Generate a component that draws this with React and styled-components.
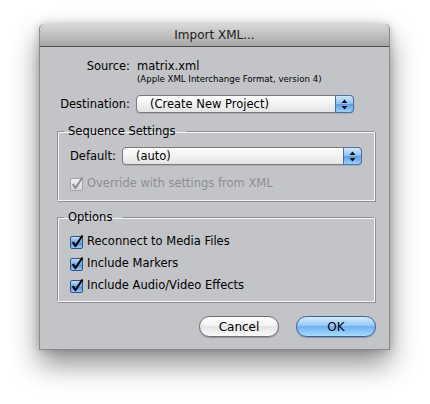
import styled, { createGlobalStyle } from "styled-components";

const GlobalStyle = createGlobalStyle`
    body {
        margin: 0;
        background: #ffffff;
        font-family: "DejaVu Sans", "Liberation Sans", sans-serif;
        font-size: 11.5px;
        color: #000;
    }
`;

const Page = styled.div`
    padding: 24px 0 0 39px;
    height: 380px;
`;

const Window = styled.div`
    width: 351px;
    display: flex;
    flex-direction: column;
    background: #c3c4c8;
    border: 1px solid #8a8a8a;
    border-top: none;
    border-radius: 5px 5px 0 0;
    box-shadow: 0 14px 28px rgba(0, 0, 0, 0.45), 0 0 8px rgba(0, 0, 0, 0.2);
    box-sizing: border-box;
`;

const TitleBar = styled.div`
    height: 22px;
    display: flex;
    align-items: center;
    justify-content: center;
    background: linear-gradient(#d8d8d8, #a7a7a7);
    border-bottom: 1px solid #4e4e4e;
    border-radius: 5px 5px 0 0;
    font-size: 12px;
    color: #202020;
`;

const Body = styled.div`
    display: flex;
    flex-direction: column;
    padding: 11px 13px 12px 16px;
`;

const FormRow = styled.div`
    display: grid;
    grid-template-columns: 74px 1fr;
    column-gap: ${(p) => p.gap || 7}px;
    align-items: center;
    margin-top: ${(p) => p.top || 0}px;
    line-height: 16px;
`;

const Label = styled.span`
    text-align: right;
`;

const Note = styled.div`
    grid-column: 2;
    font-size: 8.6px;
    line-height: 11px;
`;

const Popup = styled.div`
    position: relative;
    width: ${(p) => p.width}px;
    height: 18px;
    box-sizing: border-box;
    border: 1px solid #7a7a7a;
    border-radius: 4px;
    background: linear-gradient(#ffffff, #f2f2f2 50%, #e4e4e4);
    display: flex;
    align-items: center;
    padding-left: 13px;
    box-shadow: 0 1px 1px rgba(0, 0, 0, 0.12);
`;

const PopupArrows = styled.div`
    position: absolute;
    right: -1px;
    top: -1px;
    bottom: -1px;
    width: 17px;
    border: 1px solid #4d6fa8;
    border-radius: 0 4px 4px 0;
    background: linear-gradient(#d3e8fb, #8dbef0 50%, #5c9ee6 52%, #9fd0fb);
    display: flex;
    align-items: center;
    justify-content: center;
`;

const Group = styled.fieldset`
    margin: ${(p) => p.top}px 0 0 1px;
    padding: ${(p) => p.pt}px 12px ${(p) => p.pb}px 12px;
    border: 1px solid;
    border-color: #8f9094 #f4f4f6 #f4f4f6 #8f9094;
    box-shadow: inset 1px 1px 0 #f4f4f6, 1px 1px 0 #8f9094;
    width: 318px;
    box-sizing: border-box;
    display: flex;
    flex-direction: column;
    gap: ${(p) => p.gap || 0}px;
`;

const Legend = styled.legend`
    padding: 0 10px 0 4px;
    margin-left: -6px;
    line-height: 16px;
`;

const InlineRow = styled.div`
    display: flex;
    align-items: center;
    gap: 6px;
    line-height: 16px;
`;

const CheckRow = styled.label`
    display: flex;
    align-items: center;
    gap: 2px;
    margin-left: -1px;
    line-height: 16px;
    color: ${(p) => (p.disabled ? "#8d8e92" : "#000")};
`;

const Buttons = styled.div`
    display: flex;
    justify-content: flex-end;
    gap: 17px;
    margin-top: 14px;
`;

const Button = styled.button`
    width: 80px;
    height: 21px;
    border-radius: 11px;
    font-family: inherit;
    font-size: 12px;
    color: #000;
    padding: 0;
    border: 1px solid ${(p) => (p.primary ? "#3b5c9e" : "#6f6f6f")};
    background: ${(p) =>
        p.primary
            ? "linear-gradient(#d4ecff, #94c9f7 45%, #6eb0f0 50%, #a9dcff)"
            : "linear-gradient(#ffffff, #f4f4f4 45%, #e4e4e4 50%, #fafafa)"};
    box-shadow: 0 1px 1px rgba(0, 0, 0, 0.25);
`;

function Arrows() {
    return (
        <svg width="7" height="11" viewBox="0 0 7 11">
            <path d="M3.5 0.5 L6.5 4 L0.5 4 Z" fill="#111" />
            <path d="M3.5 10.5 L6.5 7 L0.5 7 Z" fill="#111" />
        </svg>
    );
}

function CheckBox({ disabled }) {
    const id = disabled ? "cbd" : "cbe";
    return (
        <svg width="16" height="15" viewBox="0 0 16 15">
            <defs>
                <linearGradient id={id} x1="0" y1="0" x2="0" y2="1">
                    {disabled ? (
                        <>
                            <stop offset="0" stopColor="#f2f2f2" />
                            <stop offset="1" stopColor="#d6d6d8" />
                        </>
                    ) : (
                        <>
                            <stop offset="0" stopColor="#c6e2fb" />
                            <stop offset="0.5" stopColor="#6fa9e8" />
                            <stop offset="0.55" stopColor="#4e90e0" />
                            <stop offset="1" stopColor="#9bd1fb" />
                        </>
                    )}
                </linearGradient>
            </defs>
            <rect
                x="1.5"
                y="2.5"
                width="12"
                height="12"
                rx="1.5"
                fill={`url(#${id})`}
                stroke={disabled ? "#a4a5a9" : "#32527f"}
            />
            <path
                d="M3.8 8.2 L6.5 12 L13.5 1.5"
                fill="none"
                stroke={disabled ? "#909195" : "#000"}
                strokeWidth="2.2"
                strokeLinejoin="round"
            />
        </svg>
    );
}

export default function App() {
    return (
        <>
            <GlobalStyle />
            <Page>
                <Window>
                    <TitleBar>Import XML...</TitleBar>
                    <Body>
                        <FormRow>
                            <Label>Source:</Label>
                            <span>matrix.xml</span>
                            <Note>(Apple XML Interchange Format, version 4)</Note>
                        </FormRow>
                        <FormRow top={10} gap={6}>
                            <Label>Destination:</Label>
                            <Popup width={218}>
                                (Create New Project)
                                <PopupArrows>
                                    <Arrows />
                                </PopupArrows>
                            </Popup>
                        </FormRow>
                        <Group top={10} pt={8} pb={9} gap={10}>
                            <Legend>Sequence Settings</Legend>
                            <InlineRow>
                                <span>Default:</span>
                                <Popup width={240}>
                                    (auto)
                                    <PopupArrows>
                                        <Arrows />
                                    </PopupArrows>
                                </Popup>
                            </InlineRow>
                            <CheckRow disabled>
                                <CheckBox disabled />
                                Override with settings from XML
                            </CheckRow>
                        </Group>
                        <Group top={8} pt={8} pb={8} gap={6}>
                            <Legend>Options</Legend>
                            <CheckRow>
                                <CheckBox />
                                Reconnect to Media Files
                            </CheckRow>
                            <CheckRow>
                                <CheckBox />
                                Include Markers
                            </CheckRow>
                            <CheckRow>
                                <CheckBox />
                                Include Audio/Video Effects
                            </CheckRow>
                        </Group>
                        <Buttons>
                            <Button>Cancel</Button>
                            <Button primary>OK</Button>
                        </Buttons>
                    </Body>
                </Window>
            </Page>
        </>
    );
}
